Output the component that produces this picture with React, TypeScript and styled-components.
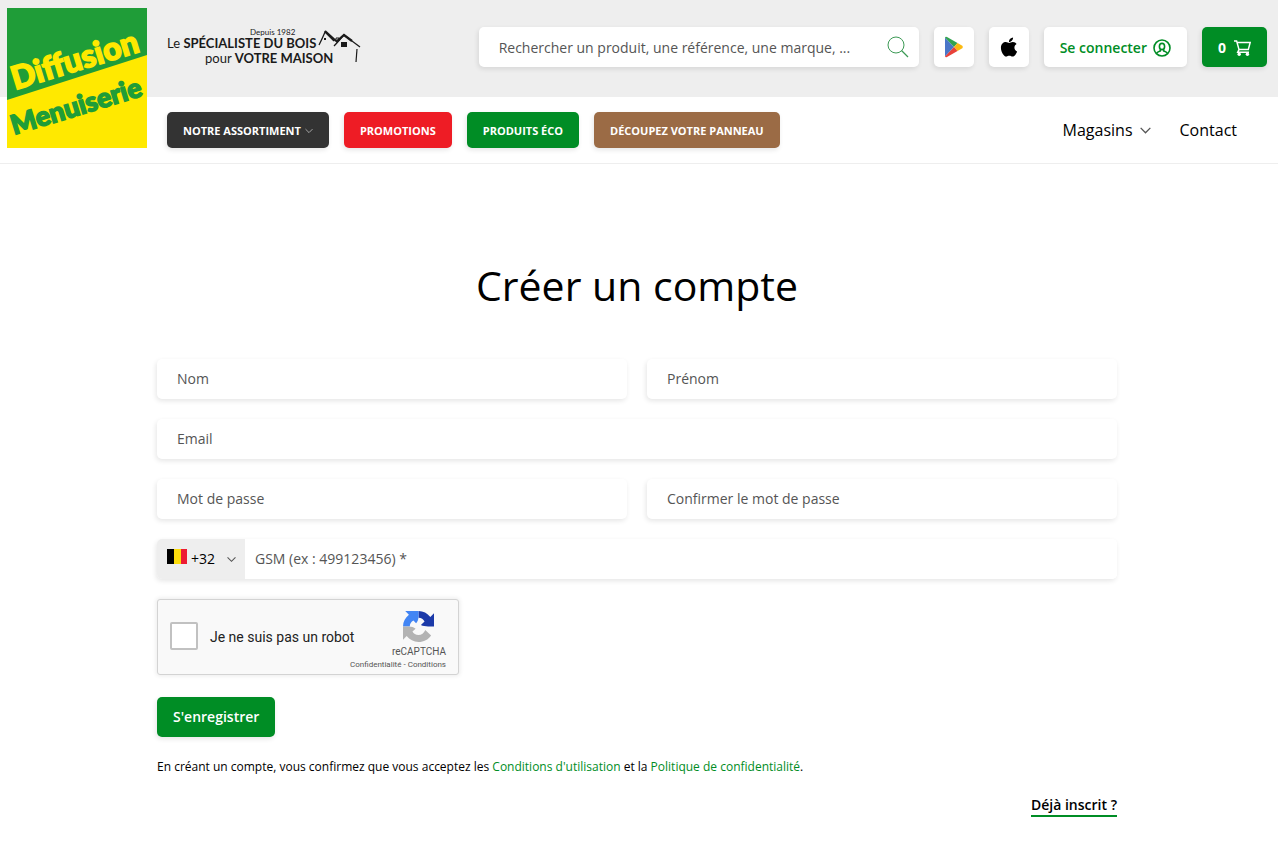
import React from "react";
import styled, { createGlobalStyle } from "styled-components";
import { FaApple } from "react-icons/fa";

const green = "#008d25";
const shadow = "-1px 2px 5px rgba(0, 0, 0, 0.1)";

const GlobalStyle = createGlobalStyle`
  *, *::before, *::after { box-sizing: border-box; }
  body {
    margin: 0;
    background: #fff;
    color: #000;
    font-family: "Open Sans", "Noto Sans", sans-serif;
    font-size: 14px;
    line-height: 20px;
  }
  a { color: inherit; text-decoration: none; }
  button, input, select { font: inherit; color: inherit; }
`;

const Header = styled.header`
  padding-right: 4px;
  border-bottom: 1px solid #eee;
  background: linear-gradient(#eee 97px, #fff 97px);
`;

const HeaderInner = styled.div`
  display: flex;
  gap: 20px;
  max-width: 1260px;
  margin: 0 auto;
`;

const LogoLink = styled.a`
  flex: none;
  height: 140px;
  margin-top: 8px;
  svg { display: block; }
`;

const HeaderRows = styled.div`
  flex: 1;
  min-width: 0;
`;

const TopRow = styled.div`
  display: flex;
  align-items: center;
  gap: 15px;
  height: 97px;
  padding-bottom: 3px;
`;

const Tagline = styled.div`
  display: grid;
  grid-template-columns: auto auto;
  column-gap: 2px;
  margin-right: auto;
  font-family: Lato, "Liberation Sans", sans-serif;
  font-size: 13px;
  line-height: 15px;
  color: #1a1a1a;
  white-space: nowrap;
  b { font-weight: 700; }
`;

const TaglineText = styled.div`
  text-align: right;
`;

const Since = styled.div`
  padding-right: 21px;
  font-size: 8px;
  line-height: 8px;
`;

const LastLine = styled.div`
  margin-right: -17px;
`;

const SearchBox = styled.form`
  display: flex;
  align-items: center;
  flex: 0 1 440px;
  height: 40px;
  padding: 0 10px 0 20px;
  border-radius: 5px;
  background: #fff;
  box-shadow: ${shadow};
`;

const SearchInput = styled.input`
  flex: 1;
  min-width: 0;
  padding: 2px 0 0;
  border: 0;
  outline: 0;
  background: none;
  &::placeholder { color: #555; opacity: 1; }
`;

const IconButton = styled.button`
  display: flex;
  padding: 0;
  border: 0;
  background: none;
`;

const HeaderButton = styled.a<{ $solid?: boolean; $square?: boolean }>`
  display: flex;
  flex: none;
  align-items: center;
  justify-content: center;
  gap: ${(p) => (p.$solid ? "8px" : "6px")};
  height: 40px;
  width: ${(p) => (p.$square ? "40px" : "auto")};
  padding: ${(p) => (p.$square ? "0" : "2px 16px 0")};
  border-radius: 5px;
  background: ${(p) => (p.$solid ? green : "#fff")};
  color: ${(p) => (p.$solid ? "#fff" : green)};
  font-weight: ${(p) => (p.$solid ? 700 : 600)};
  box-shadow: ${shadow};
`;

const NavRow = styled.nav`
  display: flex;
  align-items: center;
  gap: 15px;
  height: 66px;
  padding-right: 30px;
`;

const NavButton = styled.a<{ $color: string }>`
  display: flex;
  align-items: center;
  gap: 4px;
  height: 36px;
  padding: 2px 16px 0;
  border-radius: 5px;
  background: ${(p) => p.$color};
  color: #fff;
  font-size: 11px;
  font-weight: 700;
  white-space: nowrap;
  box-shadow: ${shadow};
`;

const NavLinks = styled.div`
  display: flex;
  gap: 29px;
  margin-left: auto;
  font-size: 16px;
`;

const NavLink = styled.a`
  display: flex;
  align-items: center;
  gap: 7px;
`;

const Main = styled.main`
  padding: 91px 4px 28px 0;
`;

const Content = styled.div`
  max-width: 960px;
  margin: 0 auto;
`;

const Title = styled.h1`
  margin: 0 0 44px;
  font-size: 41px;
  font-weight: 400;
  line-height: 60px;
  text-align: center;
`;

const FormGrid = styled.form`
  display: grid;
  grid-template-columns: 1fr 1fr;
  gap: 20px;
`;

const Field = styled.input<{ $wide?: boolean }>`
  grid-column: ${(p) => (p.$wide ? "1 / -1" : "auto")};
  width: 100%;
  min-width: 0;
  height: 40px;
  padding: 0 20px 2px;
  border: 0;
  border-radius: 5px;
  outline: 0;
  background: #fff;
  box-shadow: ${shadow};
  &::placeholder { color: #555; opacity: 1; }
`;

const PhoneRow = styled.div`
  display: flex;
  grid-column: 1 / -1;
  border-radius: 5px;
  box-shadow: ${shadow};
`;

const PhoneField = styled(Field)`
  flex: 1;
  padding: 0 10px 2px;
  border-radius: 0 5px 5px 0;
  box-shadow: none;
`;

const Country = styled.label`
  display: flex;
  align-items: center;
  gap: 4px;
  width: 88px;
  padding: 0 9px 0 10px;
  border-radius: 5px 0 0 5px;
  background: #eee;
`;

const Flag = styled.svg`
  flex: none;
  margin-bottom: 6px;
`;

const PrefixSelect = styled.select`
  flex: 1;
  min-width: 0;
  padding: 0;
  border: 0;
  outline: 0;
  appearance: none;
  background: none;
  font-weight: 500;
`;

const Captcha = styled.div`
  display: flex;
  grid-column: 1 / -1;
  justify-content: space-between;
  width: 302px;
  height: 76px;
  padding: 0 12px;
  border: 1px solid #d3d3d3;
  border-radius: 3px;
  background: #f9f9f9;
  box-shadow: 0 0 4px 1px rgba(0, 0, 0, 0.08);
  font-family: Roboto, "Liberation Sans", sans-serif;
`;

const CaptchaLabel = styled.label`
  display: flex;
  align-items: center;
  gap: 12px;
  color: #222;
  white-space: nowrap;
`;

const CaptchaCheck = styled.input`
  width: 28px;
  height: 28px;
  margin: 0 0 2px;
  border: 2px solid #c1c1c1;
  border-radius: 2px;
  appearance: none;
  background: #fff;
`;

const CaptchaBrand = styled.div`
  display: flex;
  flex-direction: column;
  align-items: flex-end;
  width: 0;
  padding-top: 11px;
  color: #555;
  font-size: 10px;
  line-height: 20px;
  white-space: nowrap;
  svg { margin-right: 12px; }
`;

const CaptchaTerms = styled.div`
  font-size: 8px;
  line-height: 5px;
`;

const SubmitButton = styled.button`
  justify-self: start;
  grid-column: 1 / -1;
  height: 40px;
  margin-top: 2px;
  padding: 0 16px;
  border: 0;
  border-radius: 5px;
  background: ${green};
  color: #fff;
  font-weight: 600;
  box-shadow: ${shadow};
`;

const Legal = styled.p`
  margin: 20px 0 18px;
  font-size: 12px;
  a { color: ${green}; }
`;

const LoginLine = styled.div`
  display: flex;
  justify-content: flex-end;
`;

const LoginLink = styled.a`
  border-bottom: 2px solid ${green};
  font-weight: 600;
`;

const Logo = () => (
  <svg width="140" height="140" viewBox="0 0 140 140" role="img" aria-label="Diffusion Menuiserie">
    <rect width="140" height="140" fill="#ffe900" />
    <path d="M0 0H140V47L0 92Z" fill="#1f9d38" />
    <g fontFamily='Lato, "Liberation Sans", sans-serif' fontWeight="900" strokeWidth="1.5">
      <text transform="translate(8 82) rotate(-17)" fontSize="32" fill="#ffe900" stroke="#ffe900">Diffusion</text>
      <text transform="translate(7 127) rotate(-17)" fontSize="27" fill="#1f9d38" stroke="#1f9d38">Menuiserie</text>
    </g>
  </svg>
);

const Roofs = () => (
  <svg width="43" height="36" viewBox="2 -1 43 36" fill="none" stroke="#1a1a1a" aria-hidden="true">
    <path d="M3 16C5 12 7 8 9 3L18 12" strokeWidth="1.3" />
    <path d="M9 2L20 12" strokeWidth="2" />
    <path d="M18 17C22 13 25 9 28 6L44 18" strokeWidth="1.3" />
    <path d="M20 13L28 6L36 12" strokeWidth="2.2" />
    <path d="M20 12V9H23V12" />
    <path d="M41 20L40 33" strokeWidth="1.2" />
    <rect x="25" y="13" width="6" height="5" fill="#1a1a1a" stroke="none" />
    <rect x="8" y="9" width="2" height="2" fill="#1a1a1a" stroke="none" />
  </svg>
);

const SearchIcon = () => (
  <svg width="22" height="22" viewBox="0 0 22 22" fill="none" stroke="#3c9a55" aria-hidden="true">
    <circle cx="9" cy="9" r="8" />
    <path d="M14.5 14.5L21 21" strokeWidth="1.3" />
  </svg>
);

const PlayIcon = () => (
  <svg width="20" height="22" viewBox="0 0 20 22" aria-hidden="true">
    <path d="M1 1.500V20.500L10 11Z" fill="#4a76c8" />
    <path d="M1 1.500Q1.500 .3 3 1L13.500 7L10 11Z" fill="#32a350" />
    <path d="M13.500 7L18.300 9.800Q19.500 11 18.300 12.200L13.500 15L10 11Z" fill="#fbb911" />
    <path d="M1 20.500Q1.500 21.700 3 21L13.500 15L10 11Z" fill="#e8413a" />
  </svg>
);

const UserIcon = () => (
  <svg width="18" height="18" viewBox="0 0 18 18" fill="none" stroke="currentColor" strokeWidth="1.600" aria-hidden="true">
    <circle cx="9" cy="9" r="8" />
    <ellipse cx="9" cy="7.500" rx="2.600" ry="3.100" />
    <path d="M3.500 14.600C4.200 12.500 6 12.400 7.300 11.900V10.500M14.500 14.600C13.800 12.500 12 12.400 10.700 11.900V10.500" />
  </svg>
);

const CartIcon = () => (
  <svg width="17" height="16" viewBox="0 0 17 16" fill="none" stroke="currentColor" strokeWidth="1.500" aria-hidden="true">
    <path d="M0 .9H2.600L5 9.600H14.300L16.200 2.400H3.200M5 9.600L3.700 12.300H15" />
    <circle cx="5.200" cy="14.200" r="1.700" fill="currentColor" stroke="none" />
    <circle cx="13.400" cy="14.200" r="1.700" fill="currentColor" stroke="none" />
  </svg>
);

const Chevron = ({ size, color }: { size: number; color: string }) => (
  <svg width={size} height={size} viewBox="0 0 10 10" fill="none" stroke={color} strokeWidth="1.2" aria-hidden="true">
    <path d="M.6 2.600L5 7L9.400 2.600" />
  </svg>
);

const CaptchaLogo = () => (
  <svg width="31" height="31" viewBox="0 0 64 64" aria-hidden="true">
    <path d="M64 32V4.600L56.400 12.200C50.200 4.600 41.800 0 32 0V14C38 14 42 17 44.500 21.500L37 29C41 31 46 32 52 32Z" fill="#1c3aa9" />
    <path d="M32 0H4.600L12.200 7.600C4.600 13.800 0 22 0 32H14C14 26 17 22 21.500 19.500L27 25.500C30 22 32 18 32 12Z" fill="#4285f4" />
    <path d="M0 32V59.400L7.600 51.800C13.800 59.400 22 64 32 64C43 64 52 59 58 50.500L46 39C43.500 45 38 49.500 32 49.500C26 49.500 22 47 19.500 42.500L26 36.500C22 33.500 18 32 12 32Z" fill="#b3b3b3" />
  </svg>
);

export default function App() {
  return (
    <>
      <GlobalStyle />
      <Header>
        <HeaderInner>
          <LogoLink href="#"><Logo /></LogoLink>
          <HeaderRows>
            <TopRow>
              <Tagline>
                <TaglineText>
                  <Since>Depuis 1982</Since>
                  <div>Le <b>SPÉCIALISTE DU BOIS</b></div>
                  <LastLine>pour <b>VOTRE MAISON</b></LastLine>
                </TaglineText>
                <Roofs />
              </Tagline>
              <SearchBox role="search">
                <SearchInput aria-label="Rechercher" placeholder="Rechercher un produit, une référence, une marque, ..." />
                <IconButton type="button" aria-label="Rechercher"><SearchIcon /></IconButton>
              </SearchBox>
              <HeaderButton href="#" $square aria-label="Google Play"><PlayIcon /></HeaderButton>
              <HeaderButton href="#" $square aria-label="App Store"><FaApple size={22} color="#000" /></HeaderButton>
              <HeaderButton href="#">Se connecter <UserIcon /></HeaderButton>
              <HeaderButton href="#" $solid>0 <CartIcon /></HeaderButton>
            </TopRow>
            <NavRow>
              <NavButton href="#" $color="#333">NOTRE ASSORTIMENT <Chevron size={8} color="#aaa" /></NavButton>
              <NavButton href="#" $color="#ee1c25">PROMOTIONS</NavButton>
              <NavButton href="#" $color={green}>PRODUITS ÉCO</NavButton>
              <NavButton href="#" $color="#9b6b45">DÉCOUPEZ VOTRE PANNEAU</NavButton>
              <NavLinks>
                <NavLink href="#">Magasins <Chevron size={11} color="#555" /></NavLink>
                <NavLink href="#">Contact</NavLink>
              </NavLinks>
            </NavRow>
          </HeaderRows>
        </HeaderInner>
      </Header>
      <Main>
        <Content>
          <Title>Créer un compte</Title>
          <FormGrid>
            <Field aria-label="Nom" placeholder="Nom" />
            <Field aria-label="Prénom" placeholder="Prénom" />
            <Field $wide type="email" aria-label="Email" placeholder="Email" />
            <Field type="password" aria-label="Mot de passe" placeholder="Mot de passe" />
            <Field type="password" aria-label="Confirmer le mot de passe" placeholder="Confirmer le mot de passe" />
            <PhoneRow>
              <Country>
                <Flag width="20" height="15" viewBox="0 0 20 15" aria-hidden="true">
                  <rect width="7" height="15" fill="#000" />
                  <rect x="7" width="7" height="15" fill="#fcdc0c" />
                  <rect x="14" width="6" height="15" fill="#ed1b34" />
                </Flag>
                <PrefixSelect aria-label="Indicatif"><option>+32</option></PrefixSelect>
                <Chevron size={9} color="#555" />
              </Country>
              <PhoneField type="tel" aria-label="GSM" placeholder="GSM (ex : 499123456) *" />
            </PhoneRow>
            <Captcha>
              <CaptchaLabel><CaptchaCheck type="checkbox" />Je ne suis pas un robot</CaptchaLabel>
              <CaptchaBrand>
                <CaptchaLogo />
                <div>reCAPTCHA</div>
                <CaptchaTerms><a href="#">Confidentialité</a> - <a href="#">Conditions</a></CaptchaTerms>
              </CaptchaBrand>
            </Captcha>
            <SubmitButton type="submit">S'enregistrer</SubmitButton>
          </FormGrid>
          <Legal>
            En créant un compte, vous confirmez que vous acceptez les <a href="#">Conditions d'utilisation</a> et la <a href="#">Politique de confidentialité</a>.
          </Legal>
          <LoginLine><LoginLink href="#">Déjà inscrit ?</LoginLink></LoginLine>
        </Content>
      </Main>
    </>
  );
}
